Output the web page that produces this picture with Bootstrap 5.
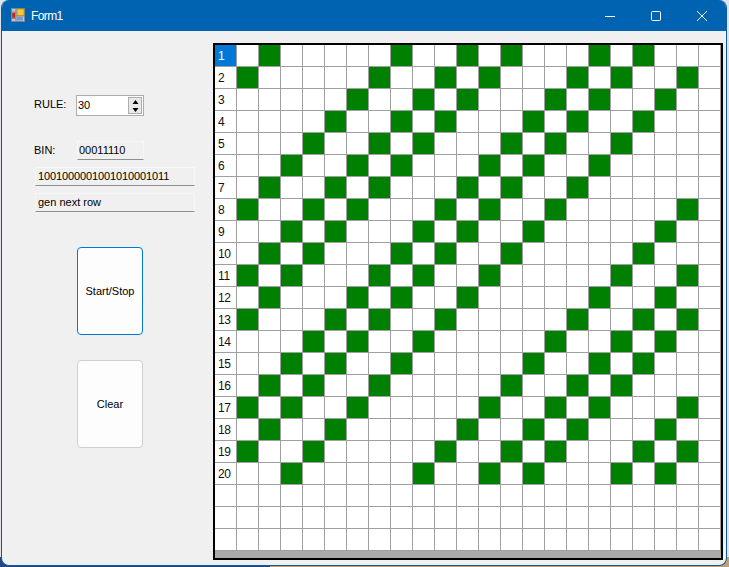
<!DOCTYPE html>
<html>
<head>
    <title>Form1</title>
    <link href="https://cdn.jsdelivr.net/npm/bootstrap@5.3.0/dist/css/bootstrap.min.css" rel="stylesheet">
    <style>
        html, body {
            height: 100%;
            overflow: hidden;
        }
        body {
            background: linear-gradient(90deg, #24477c 0 37%, #c0a06c 37% 100%) bottom / 100% 10px no-repeat, #e0e3e8;
            font-family: "Liberation Sans", Arial, sans-serif;
            font-size: 11px;
            color: #000;
        }
        .app-window {
            width: 726px;
            height: 566px;
            margin-left: 1px;
            background-color: #f0f0f0;
            border: 1px solid #0f5a9e;
            border-top: 0;
            border-radius: 8px;
            overflow: hidden;
        }
        .title-bar {
            height: 31px;
            background-color: #0063b1;
            color: #fff;
            padding-left: 9px;
            padding-right: 1px;
        }
        .title-icon {
            margin-bottom: 1px;
        }
        .title-text {
            font-size: 12px;
            letter-spacing: -0.6px;
            margin-left: 6px;
        }
        .win-btn {
            width: 46px;
            height: 31px;
        }
        .side-panel {
            width: 211px;
            padding-left: 32px;
            flex: none;
        }
        .rule-row {
            margin-top: 64px;
            height: 20px;
        }
        .field-label {
            width: 43px;
            flex: none;
        }
        .rule-row .field-label {
            width: 42px;
            padding-bottom: 2px;
        }
        .num-box {
            width: 68px;
            height: 21px;
            background-color: #fff;
            border: 1px solid #adadad;
            padding-left: 1px;
            line-height: 18px;
        }
        .spin-box {
            width: 14px;
            margin: 1px;
            border: 1px solid #adadad;
            background-color: #e9e9e9;
        }
        .spin-part {
            height: 8.5px;
            line-height: 0;
            text-align: center;
        }
        .bin-row {
            margin-top: 25px;
            height: 20px;
        }
        .flat-box {
            background-color: #f0f0f0;
            border: 1px solid #f7f7f7;
            border-bottom: 1px solid #8f8f8f;
            padding-left: 2px;
        }
        .bin-box {
            width: 67px;
            height: 19px;
            line-height: 17px;
            padding-left: 1px;
        }
        .wide-box {
            width: 160px;
            height: 19px;
            line-height: 17px;
            margin-left: 1px;
            margin-top: 7px;
        }
        .digits {
            letter-spacing: -0.12px;
        }
        .tall-btn {
            width: 66px;
            height: 88px;
            margin-left: 43px;
            padding: 0;
            font-size: 11px;
            line-height: 1;
            color: #000;
            background-color: #fdfdfd;
            border: 1px solid #d0d0d0;
            border-radius: 4px;
        }
        .tall-btn.is-default {
            border-color: #0078d4;
            margin-top: 35px;
        }
        .tall-btn.is-plain {
            margin-top: 25px;
        }
        .grid-box {
            width: 510px;
            height: 517px;
            margin-top: 12px;
            border: 2px solid #000;
            background-color: #fff;
            overflow: hidden;
        }
        .cell-table {
            border-collapse: separate;
            border-spacing: 0;
            table-layout: fixed;
            width: 506px;
        }
        .cell-table td {
            width: 22px;
            height: 22px;
            padding: 0;
            border-right: 1px solid #a0a0a0;
            border-bottom: 1px solid #a0a0a0;
            background-color: #fff;
        }
        .cell-table td.row-head {
            font-size: 12px;
            letter-spacing: -0.3px;
            padding-left: 3px;
            vertical-align: middle;
            color: #111;
        }
        .cell-table td.row-head.is-current {
            background-color: #0078d7;
            color: #fff;
        }
        .cell-table td.is-on {
            background-color: #008000;
        }
        .scroll-strip {
            height: 7px;
            background-color: #ababab;
        }
    </style>
</head>
<body>
<div class="app-window d-flex flex-column">
    <div class="title-bar d-flex align-items-center flex-shrink-0">
        <svg class="title-icon" width="14" height="14" viewBox="0 0 14 14">
            <rect x="0.5" y="0.5" width="13" height="13" fill="#c4c8cc" stroke="#7f858c"/>
            <path d="M5 0.5V13.5M0.5 4H5M0.5 10.5H5M5 8H13.5" stroke="#7f858c" fill="none"/>
            <rect x="6" y="1" width="7" height="6.5" fill="#f6c92e" stroke="#a8841a" stroke-width="0.6"/>
            <rect x="1.2" y="4.8" width="3" height="5" fill="#c8221c"/>
            <rect x="6" y="9" width="6" height="3.5" fill="#6f9be0"/>
        </svg>
        <span class="title-text">Form1</span>
        <div class="ms-auto d-flex">
            <div class="win-btn d-flex align-items-center justify-content-center">
                <svg width="10" height="10" viewBox="0 0 10 10"><path d="M0 5.5h10" stroke="#fff" fill="none"/></svg>
            </div>
            <div class="win-btn d-flex align-items-center justify-content-center">
                <svg width="10" height="10" viewBox="0 0 10 10"><rect x="0.5" y="0.5" width="9" height="9" rx="1" stroke="#fff" fill="none"/></svg>
            </div>
            <div class="win-btn d-flex align-items-center justify-content-center">
                <svg width="10" height="10" viewBox="0 0 10 10"><path d="M0 0L10 10M10 0L0 10" stroke="#fff" fill="none"/></svg>
            </div>
        </div>
    </div>
    <div class="d-flex">
        <div class="side-panel d-flex flex-column align-items-start">
            <div class="rule-row d-flex align-items-center">
                <span class="field-label">RULE:</span>
                <div class="num-box d-flex justify-content-between">
                    <span>30</span>
                    <div class="spin-box">
                        <div class="spin-part"><svg width="7" height="8" viewBox="0 0 7 8"><path d="M3.5 2L6.5 6H0.5z" fill="#000"/></svg></div>
                        <div class="spin-part"><svg width="7" height="8" viewBox="0 0 7 8"><path d="M0.5 2H6.5L3.5 6z" fill="#000"/></svg></div>
                    </div>
                </div>
            </div>
            <div class="bin-row d-flex align-items-center">
                <span class="field-label">BIN:</span>
                <div class="flat-box bin-box">00011110</div>
            </div>
            <div class="flat-box wide-box digits">1001000001001010001011</div>
            <div class="flat-box wide-box">gen next row</div>
            <button type="button" class="btn tall-btn is-default">Start/Stop</button>
            <button type="button" class="btn tall-btn is-plain">Clear</button>
        </div>
        <div class="grid-box">
            <table class="cell-table">
                <tbody id="cellRows"></tbody>
            </table>
            <div class="scroll-strip"></div>
        </div>
    </div>
</div>

<script>
    // green cells per row, column index counted from the first cell after the row header
    const liveCells = [
        [1, 7, 10, 12, 16, 18],
        [0, 6, 9, 11, 15, 17, 20],
        [5, 8, 10, 14, 16, 19],
        [4, 7, 9, 13, 15, 18],
        [3, 6, 8, 12, 14, 17],
        [2, 5, 7, 11, 13, 16],
        [1, 4, 6, 10, 12, 15],
        [0, 3, 5, 9, 11, 14, 20],
        [2, 4, 8, 10, 13, 19],
        [1, 3, 7, 9, 12, 18],
        [0, 2, 6, 8, 11, 17, 20],
        [1, 5, 7, 10, 16, 19],
        [0, 4, 6, 9, 15, 18, 20],
        [3, 5, 8, 14, 17, 19],
        [2, 4, 7, 13, 16, 18],
        [1, 3, 6, 12, 15, 17],
        [0, 2, 5, 11, 14, 16, 20],
        [1, 4, 10, 13, 15, 19],
        [0, 3, 9, 12, 14, 18, 20],
        [2, 8, 11, 13, 17, 19],
        [],
        [],
        []
    ];

    const cellRows = document.getElementById('cellRows');
    liveCells.forEach((on, rowIndex) => {
        let cells = '';
        for (let c = 0; c < 22; c++) {
            cells += `<td class="${on.includes(c) ? 'is-on' : ''}"></td>`;
        }
        const label = rowIndex < 20 ? rowIndex + 1 : '';
        const current = rowIndex === 0 ? ' is-current' : '';
        cellRows.innerHTML += `<tr><td class="row-head${current}">${label}</td>${cells}</tr>`;
    });
</script>
<script src="https://cdn.jsdelivr.net/npm/bootstrap@5.3.0/dist/js/bootstrap.bundle.min.js"></script>
</body>
</html>
